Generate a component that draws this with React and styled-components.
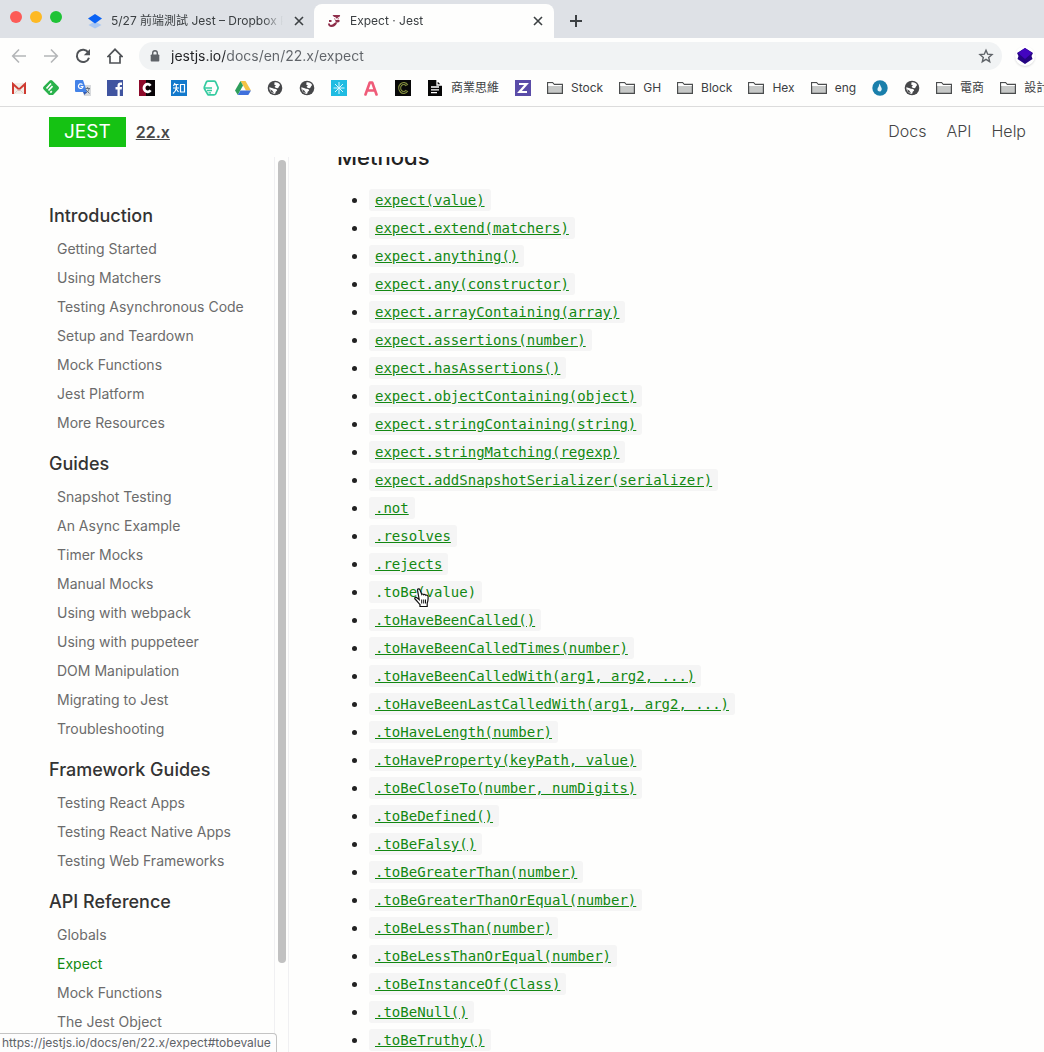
import React from 'react';
import styled, { createGlobalStyle, css } from 'styled-components';

const sans = `Inter, Roboto, "Noto Sans CJK TC", sans-serif`;

const GlobalStyle = createGlobalStyle`
  * { box-sizing: border-box; }
  body { margin: 0; background: #fefefd; font-family: ${sans}; }
  button { border: 0; padding: 0; background: none; font: inherit; color: inherit; }
  ul { margin: 0; padding: 0; }
  a { color: inherit; }
`;

const Window = styled.div`
  display: flex;
  flex-direction: column;
  height: 100vh;
  overflow: hidden;
`;

/* ---------- browser frame ---------- */

const TabStrip = styled.div`
  display: flex;
  flex: none;
  height: 38px;
  padding-left: 10px;
  background: #dee1e6;
`;

const Lights = styled.div`
  display: flex;
  gap: 8px;
  width: 69px;
  padding-top: 11px;
`;

const Light = styled.button`
  width: 12px;
  height: 12px;
  border-radius: 50%;
  background: ${(p) => p.$color};
`;

const Tab = styled.div`
  display: flex;
  align-items: center;
  gap: 8px;
  width: ${(p) => (p.$active ? 240 : 235)}px;
  margin-top: 4px;
  padding: 0 7px 0 8px;
  border-radius: 8px 8px 0 0;
  color: #3c4043;
  background: ${(p) => (p.$active ? '#fefefd' : 'transparent')};
  ${(p) => p.$active && css`padding: 0 8px 0 12px;`}
`;

const TabTitle = styled.button`
  flex: 1;
  min-width: 0;
  overflow: hidden;
  white-space: nowrap;
  text-align: left;
  font-size: 12px;
  line-height: 20px;
  mask-image: linear-gradient(to right, #000 calc(100% - 20px), transparent);
`;

const IconButton = styled.button`
  display: grid;
  place-items: center;
  flex: none;
  width: ${(p) => p.$size || 16}px;
  height: ${(p) => p.$size || 16}px;
  color: ${(p) => p.$color || '#3c4043'};
`;

const NewTab = styled(IconButton)`
  margin: 13px 0 0 14px;
`;

const Toolbar = styled.div`
  display: flex;
  align-items: center;
  flex: none;
  gap: 16px;
  height: 35px;
  padding: 0 9px 0 11px;
`;

const AddressBar = styled.label`
  display: flex;
  align-items: center;
  flex: 1;
  gap: 8px;
  height: 28px;
  padding: 0 8px;
  margin-right: -3px;
  border-radius: 14px;
  background: #f1f3f4;
`;

const AddressInput = styled.input`
  flex: 1;
  min-width: 0;
  border: 0;
  padding: 0;
  outline: 0;
  font-family: ${sans};
  font-size: 14px;
  line-height: 20px;
  color: transparent;
  background: linear-gradient(to right, #202124 54px, #5f6368 54px);
  background-clip: text;
`;

const Extension = styled(IconButton)`
  border-radius: 50%;
  background: #fff;
  box-shadow: 0 1px 2px #ddd;
`;

const Bookmarks = styled.nav`
  display: flex;
  align-items: center;
  flex: none;
  gap: 16px;
  height: 34px;
  padding: 0 0 4px 11px;
  overflow: hidden;
  border-bottom: 1px solid #dcdcdc;
`;

const Bookmark = styled.button`
  display: flex;
  align-items: center;
  flex: none;
  gap: 8px;
  font-size: 12px;
  line-height: 20px;
  white-space: nowrap;
  color: #3c4043;
`;

/* ---------- site ---------- */

const Site = styled.div`
  position: relative;
  display: flex;
  flex-direction: column;
  flex: 1;
  min-height: 0;
`;

const SiteHeader = styled.header`
  display: flex;
  align-items: center;
  flex: none;
  height: 50px;
  padding: 0 18px 0 49px;
`;

const Logo = styled.a`
  padding: 0 15px;
  background: #15c213;
  color: #fff;
  font-size: 19px;
  line-height: 30px;
  text-decoration: none;
`;

const Version = styled.a`
  margin-left: 10px;
  font-size: 16px;
  font-weight: 600;
  line-height: 24px;
  color: #484848;
`;

const SiteNav = styled.nav`
  display: flex;
  gap: 20px;
  margin-left: auto;
  padding-bottom: 2px;
`;

const SiteLink = styled.a`
  font-size: 16px;
  font-weight: 300;
  line-height: 24px;
  color: #444;
  text-decoration: none;
`;

const Columns = styled.div`
  display: flex;
  flex: 1;
  min-height: 0;
`;

const Sidebar = styled.aside`
  display: flex;
  flex: none;
  width: 289px;
  overflow: hidden;
`;

const Groups = styled.nav`
  flex: 1;
  padding: 47px 0 0 49px;
`;

const Group = styled.section`
  margin-bottom: 15px;
`;

const GroupTitle = styled.h3`
  margin: 0 0 6px;
  font-size: 18px;
  font-weight: 500;
  line-height: 24px;
  color: #333;
`;

const GroupItem = styled.li`
  padding-left: 8px;
  list-style: none;
  font-size: 14px;
  line-height: 29px;
`;

const GroupLink = styled.a`
  color: ${(p) => (p.$current ? '#118a11' : '#6b6b6b')};
  text-decoration: none;
`;

const ScrollTrack = styled.div`
  width: 15px;
  padding: 3px 3px 0;
  border: solid #f0f0f2;
  border-width: 0 1px;
`;

const ScrollThumb = styled.div`
  width: 8px;
  height: 90%;
  border-radius: 4px;
  background: #c1c1c1;
`;

const Article = styled.main`
  flex: 1;
  min-width: 0;
  padding: 0 48px;
  overflow: hidden;
`;

const ArticleTitle = styled.h2`
  margin: -16px 0 12px;
  font-size: 22px;
  font-weight: 500;
  line-height: 32px;
  color: #222;
`;

const Methods = styled.ul`
  padding-left: 32px;
  font-size: 16px;
  line-height: 28px;
  color: #222;
`;

const Method = styled.li`
  position: relative;
  height: 28px;
  white-space: nowrap;
`;

const MethodLink = styled.a`
  color: #128812;
  text-decoration: ${(p) => (p.$hovered ? 'none' : 'underline')};
`;

const Code = styled.code`
  padding: 3px 6px;
  border-radius: 3px;
  background: #f5f5f5;
  font-family: "DejaVu Sans Mono", monospace;
  font-size: 14px;
`;

const Cursor = styled.svg`
  position: absolute;
  top: 11px;
  left: 45px;
`;

const StatusBubble = styled.div`
  position: absolute;
  bottom: 0;
  left: 0;
  padding: 0 5px 0 2px;
  border: 1px solid #c4c4c4;
  border-width: 1px 1px 0 0;
  border-radius: 0 4px 0 0;
  background: #fdfdfd;
  font-size: 12px;
  line-height: 18px;
  color: #5f6368;
`;

/* ---------- drawings ---------- */

const Drawing = styled.svg`
  flex: none;
`;

const Svg = ({ children, size = 16, view = '0 0 16 16' }) => (
  <Drawing width={size} height={size} viewBox={view} fill="none" aria-hidden="true">
    {children}
  </Drawing>
);

const icons = {
  dropbox: <Svg><path d="M8 8.500 14.500 12 8 15.500 1.500 12z" fill="#a9c7f2" /><path d="M8 1 15 5.500 8 10.500 1 5.500z" fill="#0a62f5" /></Svg>,
  jest: (
    <Svg>
      <path d="M6.500 2h8l-1.300 5c.6 1-.1 2.300-1.500 2.500-.7 2.500-3 4.500-6 4.500C3 14 1.800 12.300 2.500 10.700l1-1.200" fill="#fff" />
      <path d="M6.500 2h7.700l-.8 2h-1.200l-.8 1.500h-1L9.200 4H8zM9 7h4.500v1.700l-1.500.8H10zM3 7h2.500v2H3zM2 10.500h2v1.200h2l3.500-2.500L11 10c-1 2.500-3 4-5.500 4C3.300 14 2 12.700 2 10.500z" fill="#8f2f4b" />
      <path d="m12.800 4.500-.8 2.300M8.500 5l.7 2" stroke="#c98a9b" />
    </Svg>
  ),
  close: <Svg><path d="m4 4 8 8M12 4l-8 8" stroke="currentColor" strokeWidth="1.600" /></Svg>,
  plus: <Svg><path d="M8 2v12M2 8h12" stroke="currentColor" strokeWidth="2" /></Svg>,
  back: <Svg><path d="M15 8H2M8 1.500 1.700 8 8 14.500" stroke="currentColor" strokeWidth="1.600" /></Svg>,
  forward: <Svg><path d="M1 8h13M8 1.500 14.300 8 8 14.500" stroke="currentColor" strokeWidth="1.600" /></Svg>,
  reload: <Svg><path d="M13.300 4.500A6.200 6.200 0 1 0 14 9.700" stroke="currentColor" strokeWidth="2" /><path d="M15 1v6.200H8.800z" fill="currentColor" /></Svg>,
  home: <Svg><path d="M1 8.500 8 1.300l7 7.200h-2V15H3V8.500z" stroke="currentColor" strokeWidth="1.700" /></Svg>,
  lock: <Svg><path d="M4.500 6.500h7a.8.8 0 0 1 .8.800V12.700a.8.800 0 0 1-.8.800h-7a.8.800 0 0 1-.8-.8V7.300a.8.800 0 0 1 .8-.8z" fill="#5f6368" /><path d="M5.700 7V5a2.300 2.300 0 0 1 4.600 0v2" stroke="#5f6368" strokeWidth="1.400" /></Svg>,
  star: <Svg><path d="m8 2.200 1.700 4 4.300.4-3.300 2.800 1 4.300L8 11.400l-3.700 2.300 1-4.300L2 6.600l4.300-.4z" stroke="#5f6368" strokeWidth="1.400" /></Svg>,
  cube: <Svg><path d="M8 0 14.500 4 16 5 14.500 8l1 3L8 16 .5 11l1-3L0 5z" fill="#260482" /><path d="m8 0 7 5-7 6-7-6z" fill="#4305bf" /></Svg>,
  gmail: <Svg><path d="M1 3h14v11H1z" fill="#f1eee9" /><path d="M2 14V4l6 5.500L14 4v10" stroke="#cf3b31" strokeWidth="2" /><path d="m3.500 13.500 4-4M12.500 13.500l-4-4" stroke="#d8d3cc" /></Svg>,
  feedly: <Svg><path d="M6.700.6a2 2 0 0 1 2.600 0l6 6a2 2 0 0 1 0 2.800L10 15H6L.7 9.400a2 2 0 0 1 0-2.800z" fill="#2bb24c" /><path d="m3.500 8.500 4.500-5M5.500 10.500l4-4.300M7.300 12.600l1.500-1.500" stroke="#fff" strokeWidth="1.700" /></Svg>,
  translate: <Svg><path d="M6 5h10v11H9z" fill="#d8dadd" /><path d="M1 0h7l4 12H1a1 1 0 0 1-1-1V1a1 1 0 0 1 1-1z" fill="#4483e8" /><path d="M7.500 4.700A2.300 2.300 0 1 0 8 6.500H5.700" stroke="#fff" strokeWidth="1.200" /><path d="M10.500 8.500H15M12.700 7v1.500M14 9c-.5 2-1.500 3-3 4m0-3 3.500 3.500" stroke="#6a7580" /><path d="M8 12h4l-2.500 3z" fill="#3159b0" /></Svg>,
  facebook: <Svg><path d="M0 0h16v16H0z" fill="#4054a0" /><path d="M10.500 16V9.500H8.500V7h2V5.500C10.500 3.400 11.700 2.500 13.300 2.500H15V5h-1.200c-.7 0-1 .3-1 1v1H15l-.3 2.500h-1.900V16z" fill="#fff" /></Svg>,
  cRed: <Svg><path d="M0 0h16v16H0z" fill="#080306" /><path d="M0 0h7v16H0z" fill="#8d0a2a" /><path d="M11.500 5.800A3.600 3.800 0 1 0 11.500 10.200" stroke="#fff" strokeWidth="2.800" /></Svg>,
  zhihu: <Svg><path d="M0 0h16v16H0z" fill="#1279cc" /><path d="M4 3 2.500 6M3.500 4.500h4M2 8h6M5.300 4.500V8C5 10.500 4 12 2 13.500M5.300 9l2.200 3M9.500 4.500h4v7.500h-4z" stroke="#fff" strokeWidth="1.200" /></Svg>,
  hexchat: <Svg><path d="M5 1.200h6a2 2 0 0 1 1.700 1L14.800 7a2 2 0 0 1 0 2l-2.100 4.800a2 2 0 0 1-1.700 1H5L1.300 8.500V7l2-4.800a2 2 0 0 1 1.700-1z" stroke="#35cba0" strokeWidth="1.700" strokeLinejoin="round" /><path d="M2 8h7M4 10.500h5M5.500 12.800H8" stroke="#35cba0" strokeWidth="1.300" /></Svg>,
  drive: <Svg><path d="M5.500 1h5L16 10.500h-5z" fill="#f6c344" /><path d="M5.500 1 8 5.500 2.800 15 0 10.500z" fill="#2e9e5b" /><path d="M5.500 10.500H16L13.300 15H2.800z" fill="#3f70dc" /></Svg>,
  globe: (
    <Svg>
      <circle cx="8" cy="8" r="7.300" fill="#464749" />
      <path d="M7.500 2.300c2.500-.5 4.500.7 5.600 2.600L12 6.500l-1 1.800-2-.3-1.500-1.300L9 5.500 7.300 4.700z" fill="#fff" />
      <path d="M2.300 7.200 5 8l2 .7 2.300.3.900 1.500-1.500 1.200-.5 2c-3 .2-5.800-2.300-5.900-6.500z" fill="#fff" />
      <path d="m3 9.300 2.200 1.200 1.800 2.500-2.600-.7z" fill="#464749" />
    </Svg>
  ),
  snow: <Svg><path d="M0 0h16v16H0z" fill="#20bce2" /><path d="M8 2v12M2.500 8h11M4 4l8 8M12 4l-8 8" stroke="#d9f7ff" /></Svg>,
  aPink: <Svg><path d="m2.500 14.500 4.300-12h2.400l4.300 12M4.500 10.500h7" stroke="#ef5b78" strokeWidth="2.600" strokeLinecap="round" strokeLinejoin="round" /></Svg>,
  cGreen: <Svg><path d="M0 0h16v16H0z" fill="#080808" /><path d="M12 5.500a4 4.500 0 1 0 0 5" stroke="#85903d" strokeWidth="3" /><path d="M12 5.500a4 4.500 0 1 0 0 5" stroke="#111" /></Svg>,
  page: <Svg><path d="M1 0h9l5 5v11H1z" fill="#060606" /><path d="M10 0v5h5zM4 7h8M4 9.800h8M4 12.600h6" stroke="#fff" strokeWidth="1.300" /></Svg>,
  zed: <Svg><path d="M0 0h16v16H0z" fill="#5a4ca8" /><path d="M4 4h7.500L4.500 12H12" stroke="#fff" strokeWidth="2.200" /></Svg>,
  folder: <Svg><path d="M.6 13.400V2.600h5l1.500 1.800h8.300v9z" fill="#c6c8c7" stroke="#4b4d4e" strokeWidth="1.200" /><path d="M1.200 3.200h4.200l1.600 1.900h7.800v.9H1.200z" fill="#fff" /></Svg>,
  blue: <Svg><circle cx="8" cy="8" r="7.700" fill="#1a7fab" /><path d="M7.500 3.500 9 7c1.500 2 .5 4.500-1.200 4.500C5 11.500 5 8.500 6.500 7z" fill="#e6f4fa" /></Svg>,
};

const bookmarks = [
  ['gmail', '', 'Gmail'], ['feedly', '', 'Feedly'], ['translate', '', 'Translate'], ['facebook', '', 'Facebook'],
  ['cRed', '', 'C'], ['zhihu', '', 'Zhihu'], ['hexchat', '', 'Chat'], ['drive', '', 'Drive'], ['globe', '', 'Site'],
  ['globe', '', 'Site'], ['snow', '', 'Snow'], ['aPink', '', 'A'], ['cGreen', '', 'C'], ['page', '商業思維'],
  ['zed', '', 'Z'], ['folder', 'Stock'], ['folder', 'GH'], ['folder', 'Block'], ['folder', 'Hex'], ['folder', 'eng'],
  ['blue', '', 'Drop'], ['globe', '', 'Site'], ['folder', '電商'], ['folder', '設計'],
];

const groups = [
  ['Introduction', ['Getting Started', 'Using Matchers', 'Testing Asynchronous Code', 'Setup and Teardown', 'Mock Functions', 'Jest Platform', 'More Resources']],
  ['Guides', ['Snapshot Testing', 'An Async Example', 'Timer Mocks', 'Manual Mocks', 'Using with webpack', 'Using with puppeteer', 'DOM Manipulation', 'Migrating to Jest', 'Troubleshooting']],
  ['Framework Guides', ['Testing React Apps', 'Testing React Native Apps', 'Testing Web Frameworks']],
  ['API Reference', ['Globals', 'Expect', 'Mock Functions', 'The Jest Object']],
];

const methods = [
  'expect(value)', 'expect.extend(matchers)', 'expect.anything()', 'expect.any(constructor)',
  'expect.arrayContaining(array)', 'expect.assertions(number)', 'expect.hasAssertions()',
  'expect.objectContaining(object)', 'expect.stringContaining(string)', 'expect.stringMatching(regexp)',
  'expect.addSnapshotSerializer(serializer)', '.not', '.resolves', '.rejects', '.toBe(value)',
  '.toHaveBeenCalled()', '.toHaveBeenCalledTimes(number)', '.toHaveBeenCalledWith(arg1, arg2, ...)',
  '.toHaveBeenLastCalledWith(arg1, arg2, ...)', '.toHaveLength(number)', '.toHaveProperty(keyPath, value)',
  '.toBeCloseTo(number, numDigits)', '.toBeDefined()', '.toBeFalsy()', '.toBeGreaterThan(number)',
  '.toBeGreaterThanOrEqual(number)', '.toBeLessThan(number)', '.toBeLessThanOrEqual(number)',
  '.toBeInstanceOf(Class)', '.toBeNull()', '.toBeTruthy()',
];

const hovered = '.toBe(value)';

const HandCursor = () => (
  <Cursor width="16" height="20" viewBox="0 0 16 20" aria-hidden="true">
    <path
      d="M3.500 2.200c-.2-1.500 1.800-1.900 2.400-.5L7.800 6.500c.5-.8 1.700-.6 2 .3.700-.6 1.800-.4 2.100.5.900-.5 2 0 2.100 1.200.3 2.500 0 4.500-.8 6.500V18.500H6v-2C4.500 15 3 13 1 11c-.9-1.200.7-2.200 1.900-1.300L5.200 11.500z"
      fill="#fff" stroke="#111" strokeWidth="1.200"
    />
    <path d="M7.700 11.500v4M9.700 11.500v4M11.500 11.500v4" stroke="#111" />
  </Cursor>
);

export default function App() {
  return (
    <Window>
      <GlobalStyle />
      <TabStrip>
        <Lights>
          <Light $color="#fc5b57" aria-label="Close window" />
          <Light $color="#fdb924" aria-label="Minimise" />
          <Light $color="#1fc336" aria-label="Zoom" />
        </Lights>
        <Tab>
          {icons.dropbox}
          <TabTitle>5/27 前端測試 Jest – Dropbox Paper</TabTitle>
          <IconButton aria-label="Close tab">{icons.close}</IconButton>
        </Tab>
        <Tab $active>
          {icons.jest}
          <TabTitle>Expect · Jest</TabTitle>
          <IconButton aria-label="Close tab">{icons.close}</IconButton>
        </Tab>
        <NewTab aria-label="New tab">{icons.plus}</NewTab>
      </TabStrip>

      <Toolbar>
        <IconButton $color="#b4b6b8" aria-label="Back">{icons.back}</IconButton>
        <IconButton $color="#b4b6b8" aria-label="Forward">{icons.forward}</IconButton>
        <IconButton $color="#505357" aria-label="Reload">{icons.reload}</IconButton>
        <IconButton $color="#505357" aria-label="Home">{icons.home}</IconButton>
        <AddressBar>
          {icons.lock}
          <AddressInput type="text" aria-label="Address" defaultValue="jestjs.io/docs/en/22.x/expect" />
          <IconButton aria-label="Bookmark this page">{icons.star}</IconButton>
        </AddressBar>
        <Extension $size={20} aria-label="Extension">{icons.cube}</Extension>
      </Toolbar>

      <Bookmarks aria-label="Bookmarks">
        {bookmarks.map(([icon, text, label], i) => (
          <Bookmark key={i} aria-label={label}>
            {icons[icon]}
            {text && <span>{text}</span>}
          </Bookmark>
        ))}
      </Bookmarks>

      <Site>
        <SiteHeader>
          <Logo href="#home">JEST</Logo>
          <Version href="#versions">22.x</Version>
          <SiteNav>
            <SiteLink href="#docs">Docs</SiteLink>
            <SiteLink href="#api">API</SiteLink>
            <SiteLink href="#help">Help</SiteLink>
          </SiteNav>
        </SiteHeader>
        <Columns>
          <Sidebar>
            <Groups>
              {groups.map(([title, items]) => (
                <Group key={title}>
                  <GroupTitle>{title}</GroupTitle>
                  <ul>
                    {items.map((item) => (
                      <GroupItem key={item}>
                        <GroupLink href="#page" $current={item === 'Expect'}>{item}</GroupLink>
                      </GroupItem>
                    ))}
                  </ul>
                </Group>
              ))}
            </Groups>
            <ScrollTrack><ScrollThumb /></ScrollTrack>
          </Sidebar>
          <Article>
            <ArticleTitle>Methods</ArticleTitle>
            <Methods>
              {methods.map((name) => (
                <Method key={name}>
                  <MethodLink href="#method" $hovered={name === hovered}><Code>{name}</Code></MethodLink>
                  {name === hovered && <HandCursor />}
                </Method>
              ))}
            </Methods>
          </Article>
        </Columns>
        <StatusBubble>https://jestjs.io/docs/en/22.x/expect#tobevalue</StatusBubble>
      </Site>
    </Window>
  );
}
